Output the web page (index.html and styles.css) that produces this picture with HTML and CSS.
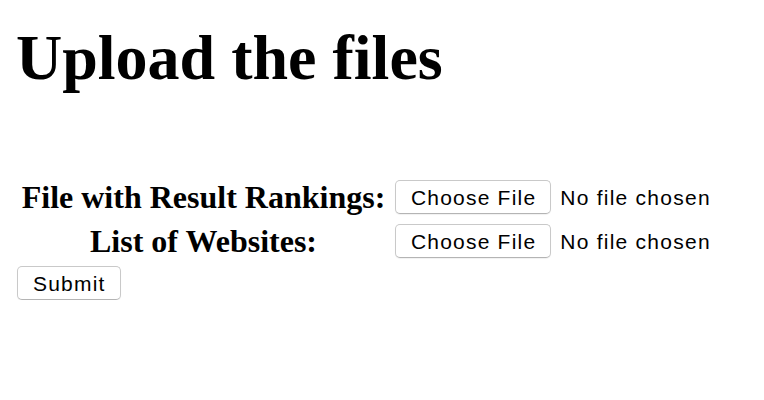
FILE: index.html
```html
<!DOCTYPE html>
<html lang="en">
<head>
<meta charset="utf-8">
<title>Upload the files</title>
<link rel="stylesheet" href="styles.css">
</head>
<body>
<main class="page">
  <h1 class="title">Upload the files</h1>
  <form class="upload-form">
    <div class="fields">
      <div class="label">File with Result Rankings:</div>
      <div class="file-input">
        <span class="btn">Choose File</span>
        <span class="file-name">No file chosen</span>
      </div>
      <div class="label">List of Websites:</div>
      <div class="file-input">
        <span class="btn">Choose File</span>
        <span class="file-name">No file chosen</span>
      </div>
    </div>
    <button type="button" class="btn submit">Submit</button>
  </form>
</main>
</body>
</html>
```

FILE: styles.css
```css
html, body {
  margin: 0;
  padding: 0;
  background: #ffffff;
}

.page {
  padding: 0 16px;
  font-family: "Liberation Serif", "Times New Roman", serif;
  color: #000;
}

.title {
  margin: 21px 0 0 0;
  font-size: 64px;
  line-height: 74px;
  font-weight: bold;
}

.upload-form {
  margin-top: 85px;
  display: flex;
  flex-direction: column;
  align-items: flex-start;
}

.fields {
  display: grid;
  grid-template-columns: 375px auto;
  grid-auto-rows: 33px;
  row-gap: 11px;
  align-items: center;
}

.label {
  text-align: center;
  font-size: 32px;
  line-height: 33px;
  font-weight: bold;
  padding-top: 1px;
}

.file-input {
  display: flex;
  align-items: center;
  gap: 9px;
  padding-left: 4px;
}

.btn {
  box-sizing: border-box;
  display: inline-flex;
  align-items: center;
  justify-content: center;
  height: 34px;
  padding: 2px 14px 0 15px;
  background: #ffffff;
  border: 1px solid #c9c9c9;
  border-bottom-color: #b4b4b4;
  border-radius: 5px;
  box-shadow: 0 1px 1px rgba(0, 0, 0, 0.06);
  font-family: "Liberation Sans", Arial, sans-serif;
  font-size: 21px;
  letter-spacing: 1.2px;
  color: #000;
  white-space: nowrap;
}

.file-name {
  font-family: "Liberation Sans", Arial, sans-serif;
  font-size: 21px;
  letter-spacing: 1.25px;
  white-space: nowrap;
  padding-top: 2px;
}

.submit {
  margin-top: 9px;
  margin-left: 1px;
  padding: 2px 14px 0 15px;
  cursor: pointer;
}
```
